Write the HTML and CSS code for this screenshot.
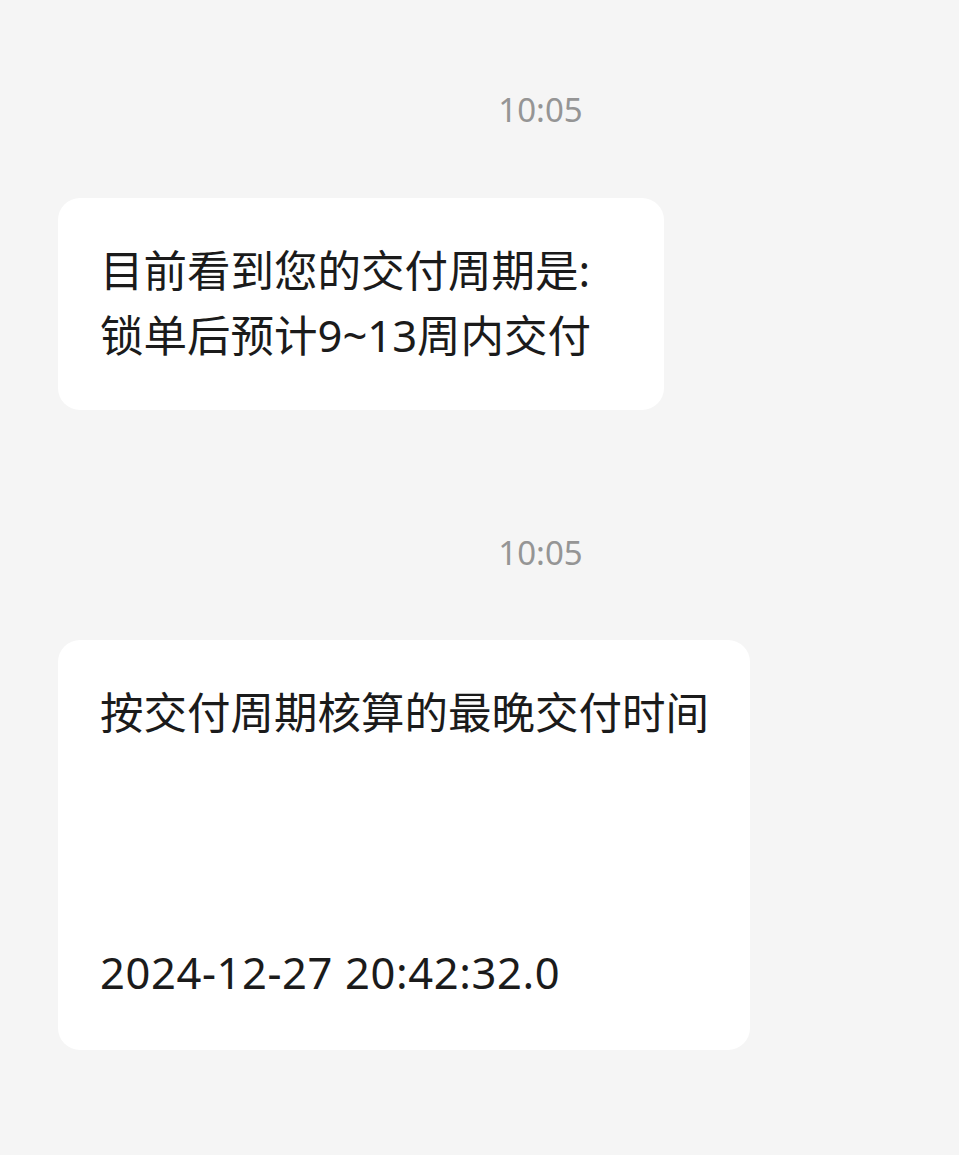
FILE: index.html
```html
<!DOCTYPE html>
<html lang="zh-CN">
<head>
    <meta charset="UTF-8">
    <meta name="viewport" content="width=device-width, initial-scale=1.0">
    <title>消息</title>
    <link rel="stylesheet" href="styles.css">
</head>
<body>
<div class="chat">
    <div class="time first">10:05</div>
    <div class="bubble bubble-short">目前看到您的交付周期是:<br>锁单后预计9~13周内交付</div>

    <div class="time">10:05</div>
    <div class="bubble bubble-long">按交付周期核算的最晚交付时间<br><br><br><br><span class="stamp">2024-12-27 20:42:32.0</span></div>
</div>
</body>
</html>
```

FILE: styles.css
```css
body {
    margin: 0;
    background-color: #f5f5f5;
    font-family: "Noto Sans", "Noto Sans CJK SC", sans-serif;
    color: #1b1b1b;
}

.chat {
    display: flex;
    flex-direction: column;
    align-items: flex-start;
    padding: 0 0 105px 58px;
}

.time {
    align-self: stretch;
    padding-left: 64px;
    text-align: center;
    font-size: 33px;
    line-height: 44px;
    color: #959595;
    margin-top: 121px;
    margin-bottom: 65px;
}

.time.first {
    margin-top: 88px;
    margin-bottom: 66px;
}

.bubble {
    box-sizing: border-box;
    background-color: #fff;
    border-radius: 22px;
    padding: 40px 40px 42px 42px;
    font-size: 43.5px;
    line-height: 65px;
}

.bubble-short {
    width: 606px;
}

.bubble-long {
    width: 692px;
    padding-bottom: 45px;
}

.stamp {
    letter-spacing: 0.6px;
}
```
